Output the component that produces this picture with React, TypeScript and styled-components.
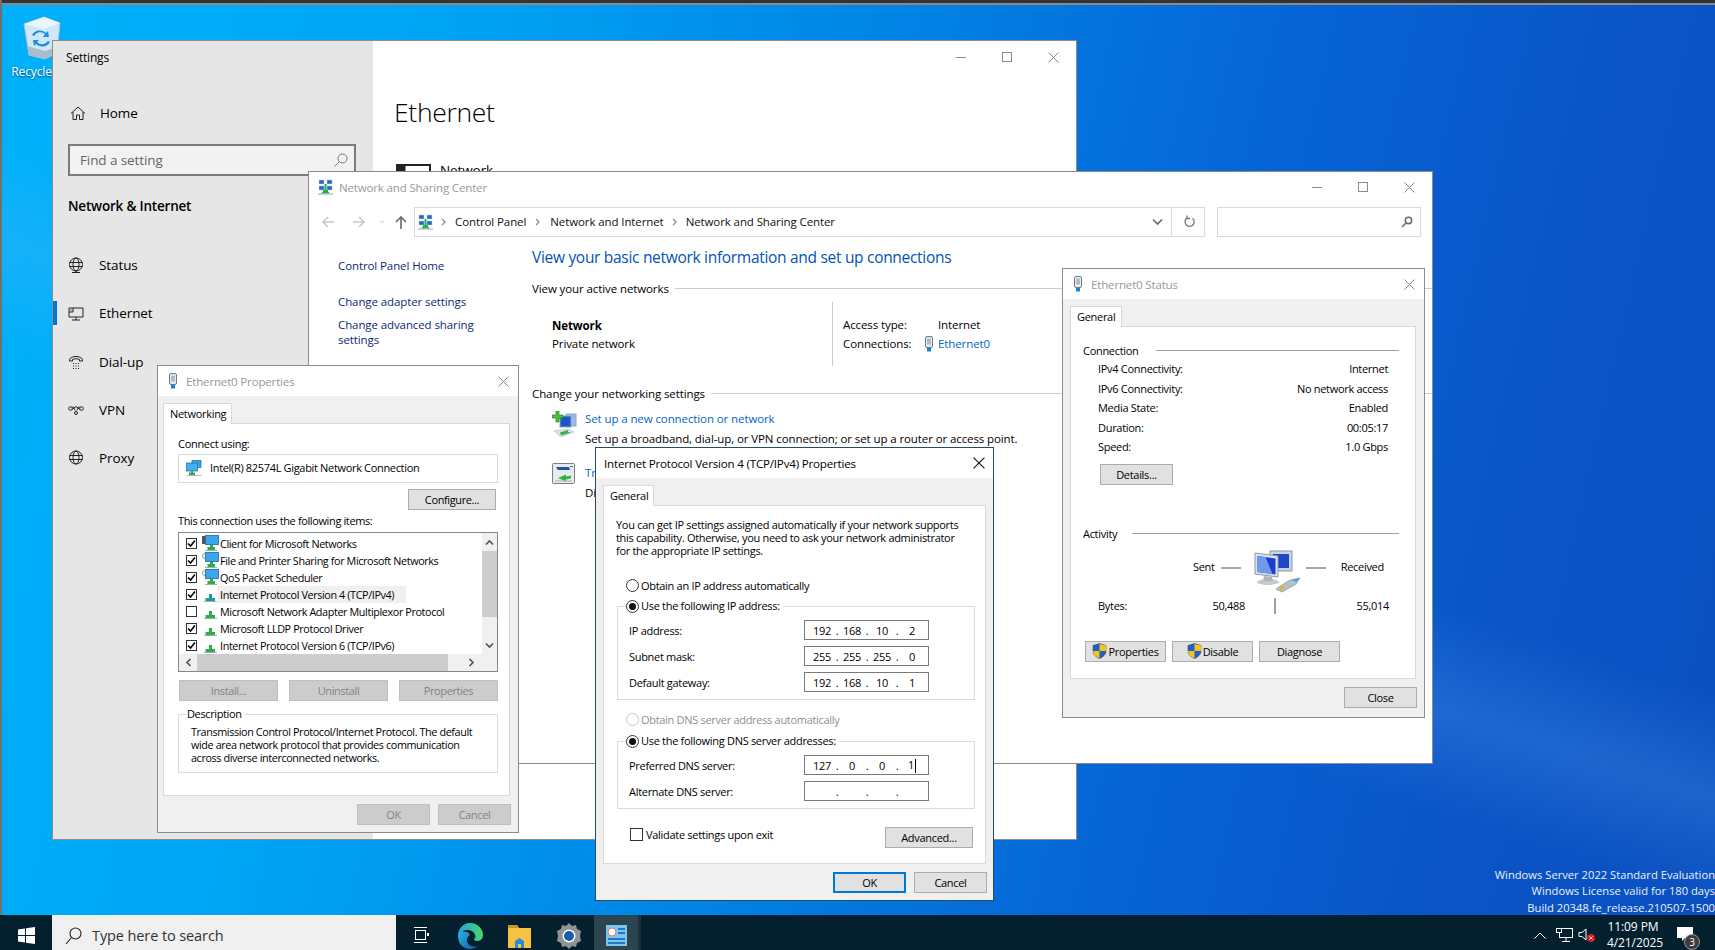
import React from 'react';
import styled, { createGlobalStyle } from 'styled-components';

const FONT = '"Open Sans", "Noto Sans", "Liberation Sans", sans-serif';

const GlobalStyle = createGlobalStyle`
  html, body { margin: 0; padding: 0; height: 100%; overflow: hidden; }
  body { font-family: ${FONT}; font-size: 11px; letter-spacing: -0.3px; color: #000; }
  * { box-sizing: border-box; }
`;

const Desktop = styled.div`
  position: relative;
  width: 1715px;
  height: 950px;
  overflow: hidden;
  display: flex;
  flex-direction: column;
  justify-content: flex-end;
  background:
    linear-gradient(18deg, rgba(255,255,255,0) 40%, rgba(120,190,255,.18) 47%, rgba(255,255,255,0) 54%),
    linear-gradient(103deg, #00b1fa 0%, #00a6f5 22%, #0086e6 45%, #0666d6 66%, #0a55c8 84%, #0a4fc0 100%);
  &::before {
    content: '';
    position: absolute;
    left: 0;
    right: 0;
    top: 0;
    height: 5px;
    background: linear-gradient(#333 0 66%, #8a8a8a 66%);
  }
  &::after {
    content: '';
    position: absolute;
    left: 0;
    top: 0;
    bottom: 0;
    width: 2px;
    background: #707070;
  }
`;

const RecycleBin = styled.div`
  position: absolute;
  left: 12px;
  top: 16px;
  width: 60px;
  display: flex;
  flex-direction: column;
  align-items: center;
  gap: 3px;
  color: #fff;
  font-size: 12px;
  letter-spacing: -0.1px;
  white-space: nowrap;
  text-shadow: 0 1px 2px rgba(0,0,0,.6);
`;

const Win = styled.div<{ $x: number; $y: number; $w: number; $h: number; $dark?: boolean }>`
  position: absolute;
  left: ${p => p.$x}px;
  top: ${p => p.$y}px;
  width: ${p => p.$w}px;
  height: ${p => p.$h}px;
  display: flex;
  flex-direction: column;
  background: #fff;
  border: 1px solid ${p => (p.$dark ? '#2b4a5c' : '#8c8c8c')};
`;

/* caption buttons */
const CapRow = styled.div`
  display: flex;
  margin-left: auto;
  flex: none;
`;
const CapBtn = styled.div<{ $h?: number; $w?: number }>`
  width: ${p => p.$w ?? 46}px;
  height: ${p => p.$h ?? 30}px;
  display: flex;
  align-items: center;
  justify-content: center;
`;

const XIcon = ({ size = 11, color = '#8a8a8a' }: { size?: number; color?: string }) => (
  <svg width={size} height={size} viewBox="0 0 11 11">
    <path d="M.5.5l10 10M10.5.5l-10 10" stroke={color} strokeWidth="1" fill="none" />
  </svg>
);
const MaxIcon = () => (
  <svg width="10" height="10" viewBox="0 0 10 10">
    <rect x=".5" y=".5" width="9" height="9" fill="none" stroke="#8a8a8a" />
  </svg>
);
const MinIcon = () => (
  <svg width="10" height="10" viewBox="0 0 10 10">
    <path d="M0 5.500h10" stroke="#8a8a8a" />
  </svg>
);

const Captions = ({ h }: { h?: number }) => (
  <CapRow>
    <CapBtn $h={h}><MinIcon /></CapBtn>
    <CapBtn $h={h}><MaxIcon /></CapBtn>
    <CapBtn $h={h}><XIcon /></CapBtn>
  </CapRow>
);

/* settings window */
const SettingsBody = styled.div`
  display: flex;
  flex: 1;
  min-height: 0;
`;
const Sidebar = styled.div`
  width: 320px;
  background: #e6e6e6;
  display: flex;
  flex-direction: column;
`;
const SetTitle = styled.div`
  height: 34px;
  line-height: 34px;
  padding-left: 13px;
  font-size: 12px;
  letter-spacing: -0.2px;
`;
const HomeRow = styled.div`
  margin-top: 14px;
  height: 48px;
  display: flex;
  align-items: center;
  gap: 14px;
  padding-left: 17px;
  font-size: 13.5px;
  letter-spacing: -0.1px;
`;
const SearchBox = styled.div`
  margin: 7px 0 0 15px;
  width: 288px;
  height: 32px;
  border: 2px solid #7a7a7a;
  background: #f2f2f2;
  display: flex;
  align-items: center;
  justify-content: space-between;
  padding: 0 5px 0 10px;
  color: #666;
  font-size: 13.5px;
  letter-spacing: -0.1px;
`;
const SideHeading = styled.div`
  margin: 10px 0 15px 15px;
  height: 40px;
  line-height: 40px;
  font-size: 13.5px;
  font-weight: 600;
  letter-spacing: -0.2px;
`;
const NavRow = styled.div<{ $active?: boolean }>`
  position: relative;
  height: 48.3px;
  display: flex;
  align-items: center;
  gap: 15px;
  padding-left: 15px;
  font-size: 13.5px;
  letter-spacing: -0.1px;
  &::before {
    content: '';
    display: ${p => (p.$active ? 'block' : 'none')};
    position: absolute;
    left: 0;
    top: 12px;
    width: 4px;
    height: 24px;
    background: #0078d7;
  }
`;
const SetMain = styled.div`
  flex: 1;
  display: flex;
  flex-direction: column;
`;
const SetHeading = styled.div`
  margin: 19px 0 0 21px;
  height: 40px;
  line-height: 40px;
  font-size: 26.5px;
  font-weight: 300;
  letter-spacing: -0.3px;
`;
const SetNetRow = styled.div`
  margin: 32px 0 0 23px;
  display: flex;
  align-items: flex-start;
  gap: 9px;
  font-size: 13.5px;
  letter-spacing: -0.1px;
  line-height: 12px;
`;

/* network and sharing center */
const TitleRow = styled.div<{ $h?: number; $pl?: number; $gap?: number }>`
  height: ${p => p.$h ?? 30}px;
  flex: none;
  display: flex;
  align-items: center;
  padding-left: ${p => p.$pl ?? 9}px;
  gap: ${p => p.$gap ?? 6}px;
`;
const TitleText = styled.span<{ $active?: boolean }>`
  color: ${p => (p.$active ? '#000' : '#999')};
  font-size: 11.6px;
  letter-spacing: -0.2px;
`;
const ToolRow = styled.div`
  height: 39px;
  flex: none;
  display: flex;
  align-items: center;
  padding-right: 11px;
`;
const NavButtons = styled.div`
  width: 105px;
  flex: none;
  display: flex;
  align-items: center;
  padding-left: 12px;
`;
const AddressBar = styled.div`
  width: 791px;
  height: 30px;
  flex: none;
  display: flex;
  align-items: center;
  border: 1px solid #d9d9d9;
  padding-left: 3px;
`;
const Crumb = styled.span`
  font-size: 11.5px;
  color: #111;
  letter-spacing: -0.1px;
`;
const AddrEnd = styled.div`
  margin-left: auto;
  display: flex;
  align-items: center;
  height: 100%;
`;
const RefreshCell = styled.div`
  width: 33px;
  height: 100%;
  margin-left: 8px;
  padding-left: 3px;
  border-left: 1px solid #d9d9d9;
  display: flex;
  align-items: center;
  justify-content: center;
`;
const TopSearch = styled.div`
  margin-left: 12px;
  flex: 1;
  height: 30px;
  border: 1px solid #d9d9d9;
  display: flex;
  align-items: center;
  justify-content: flex-end;
  padding-right: 7px;
`;
const NscBody = styled.div`
  flex: 1;
  display: flex;
  min-height: 0;
  font-size: 11.5px;
  letter-spacing: -0.1px;
`;
const LeftPane = styled.div`
  width: 222px;
  flex: none;
  padding: 17px 0 0 29px;
  color: #0d2a75;
  line-height: 15px;
`;
const PaneLink = styled.div<{ $mt?: number }>`
  margin-top: ${p => p.$mt ?? 0}px;
`;
const MainPane = styled.div`
  flex: 1;
  padding: 6px 0 0 1px;
  overflow: hidden;
`;
const NscHeading = styled.div`
  height: 20px;
  line-height: 20px;
  font-size: 15.5px;
  letter-spacing: -0.3px;
  color: #0054b4;
`;
const SectionHead = styled.div<{ $mt: number }>`
  margin-top: ${p => p.$mt}px;
  height: 15px;
  line-height: 15px;
  display: flex;
  align-items: center;
  gap: 6px;
  &::after {
    content: '';
    flex: 1;
    height: 1px;
    background: #ccc;
  }
`;
const ActiveNets = styled.div`
  margin-top: 6px;
  height: 64px;
  display: flex;
`;
const NetName = styled.div`
  width: 301px;
  padding: 15px 0 0 20px;
  border-right: 1px solid #ccc;
  line-height: 18px;
`;
const Bold = styled.div`
  font-weight: 700;
`;
const NetProps = styled.div`
  padding: 13px 0 0 10px;
  display: grid;
  grid-template-columns: 95px auto;
  grid-auto-rows: 19px;
  align-items: center;
`;
const EthLink = styled.span`
  display: inline-flex;
  align-items: center;
  color: #0066cc;
  position: relative;
`;
const ConnLabel = styled.span`
  display: flex;
  align-items: center;
  justify-content: space-between;
  padding-right: 4px;
`;
const Task = styled.div<{ $mt: number }>`
  margin-top: ${p => p.$mt}px;
  padding-left: 20px;
  display: flex;
  gap: 8px;
  line-height: 20px;
`;
const TaskLink = styled.div`
  color: #0066cc;
`;

/* dialog */
const DlgInner = styled.div<{ $pt: number; $pr: number; $pl: number }>`
  flex: 1;
  background: #f0f0f0;
  padding: ${p => p.$pt}px ${p => p.$pr}px 0 ${p => p.$pl}px;
  display: flex;
  flex-direction: column;
  min-height: 0;
`;
const Tab = styled.div<{ $w: number }>`
  width: ${p => p.$w}px;
  height: 21px;
  flex: none;
  background: #fff;
  border: 1px solid #d9d9d9;
  border-bottom: none;
  margin-bottom: -1px;
  position: relative;
  z-index: 1;
  line-height: 20px;
  padding-left: 6px;
`;
const TabPanel = styled.div<{ $h: number }>`
  height: ${p => p.$h}px;
  flex: none;
  background: #fff;
  border: 1px solid #d9d9d9;
  display: flex;
  flex-direction: column;
`;
const Footer = styled.div`
  margin: 8px -1px 0 0;
  display: flex;
  justify-content: flex-end;
  gap: 8px;
`;
const Btn = styled.div<{ $w?: number; $disabled?: boolean; $default?: boolean }>`
  width: ${p => p.$w ?? 73}px;
  height: 21px;
  flex: none;
  background: ${p => (p.$disabled ? '#cccccc' : '#e1e1e1')};
  border: ${p => (p.$default ? '2px solid #0078d7' : `1px solid ${p.$disabled ? '#bfbfbf' : '#adadad'}`)};
  color: ${p => (p.$disabled ? '#838383' : '#000')};
  display: flex;
  align-items: center;
  justify-content: center;
  gap: 1px;
`;
const Line = styled.div<{ $mt?: number; $ml?: number }>`
  margin: ${p => p.$mt ?? 0}px 0 0 ${p => p.$ml ?? 0}px;
  height: 15px;
  line-height: 15px;
`;
const PropsBody = styled.div`
  margin-left: 14px;
  letter-spacing: -0.38px;
`;
const AdapterBox = styled.div`
  margin-top: 3px;
  width: 320px;
  height: 29px;
  border: 1px solid #d9d9d9;
  display: flex;
  align-items: center;
  gap: 8px;
  padding: 0 0 2px 7px;
  letter-spacing: -0.33px;
`;
const RightRow = styled.div<{ $w: number }>`
  margin-top: 6px;
  width: ${p => p.$w}px;
  display: flex;
  justify-content: flex-end;
`;
const ItemList = styled.div`
  margin-top: 4px;
  width: 320px;
  height: 140px;
  border: 1px solid #7f8790;
  display: grid;
  grid-template-columns: 1fr 15px;
  grid-template-rows: 1fr 17px;
`;
const Rows = styled.div`
  padding-top: 2px;
  overflow: hidden;
  font-size: 10.8px;
`;
const ItemRow = styled.div`
  height: 17px;
  display: flex;
  align-items: center;
  padding-left: 7px;
`;
const ItemLabel = styled.span<{ $sel?: boolean }>`
  height: 17px;
  line-height: 17px;
  padding: 0 12px 0 2px;
  white-space: nowrap;
  background: ${p => (p.$sel ? '#f0f0f0' : 'transparent')};
`;
const Check = styled.span<{ $size?: number; $mr?: number }>`
  width: ${p => p.$size ?? 11}px;
  height: ${p => p.$size ?? 11}px;
  flex: none;
  border: 1px solid #333;
  background: #fff;
  display: flex;
  align-items: center;
  justify-content: center;
  margin-right: ${p => p.$mr ?? 6}px;
`;
const VScroll = styled.div`
  background: #f0f0f0;
  display: flex;
  flex-direction: column;
  align-items: center;
  justify-content: space-between;
`;
const VThumb = styled.div`
  width: 100%;
  height: 66px;
  background: #cdcdcd;
  margin-bottom: auto;
`;
const HScroll = styled.div`
  grid-column: 1 / span 2;
  background: #f0f0f0;
  display: flex;
  align-items: center;
`;
const HThumb = styled.div`
  width: 251px;
  height: 100%;
  background: #cdcdcd;
`;
const ArrowCell = styled.div<{ $w: number; $h: number }>`
  width: ${p => p.$w}px;
  height: ${p => p.$h}px;
  flex: none;
  display: flex;
  align-items: center;
  justify-content: center;
`;
const BtnRow = styled.div`
  margin-top: 8px;
  width: 320px;
  padding-left: 1px;
  display: flex;
  justify-content: space-between;
`;
const Fieldset = styled.fieldset<{ $w: number; $h: number; $mt: number; $ml?: number }>`
  margin: ${p => p.$mt}px 0 0 ${p => p.$ml ?? 0}px;
  width: ${p => p.$w}px;
  height: ${p => p.$h}px;
  border: 1px solid #dcdcdc;
  padding: 0;
  min-width: 0;
`;
const Legend = styled.legend`
  margin-left: 8px;
  padding: 0 3px 0 0;
  line-height: 16px;
  display: flex;
  align-items: center;
`;
const FieldGap = styled.div`
  height: 6px;
`;
const DescText = styled.div`
  padding: 3px 0 0 12px;
  line-height: 13px;
  font-size: 10.8px;
  white-space: nowrap;
`;
const InfoText = styled.div`
  margin: 12px 0 0 12px;
  line-height: 13px;
  white-space: nowrap;
`;
const RadioRow = styled.div<{ $mt: number; $dim?: boolean }>`
  margin: ${p => p.$mt}px 0 0 22px;
  height: 16px;
  display: flex;
  align-items: center;
  color: ${p => (p.$dim ? '#8f8f8f' : '#000')};
`;
const Radio = styled.span<{ $on?: boolean; $dim?: boolean }>`
  width: 13px;
  height: 13px;
  flex: none;
  border-radius: 50%;
  border: 1px solid ${p => (p.$dim ? '#c4c4c4' : '#333')};
  background: #fff;
  margin-right: 2px;
  display: flex;
  align-items: center;
  justify-content: center;
  &::after {
    content: '';
    display: ${p => (p.$on ? 'block' : 'none')};
    width: 7px;
    height: 7px;
    border-radius: 50%;
    background: #111;
  }
`;
const IpRow = styled.div`
  height: 20px;
  margin-bottom: 6px;
  padding-left: 11px;
  display: grid;
  grid-template-columns: 175px 125px;
  align-items: center;
`;
const IpBox = styled.div`
  height: 20px;
  border: 1px solid #7a7a7a;
  padding-left: 6px;
  display: flex;
  align-items: center;
  background: #fff;
`;
const IpSeg = styled.span`
  width: 22px;
  text-align: center;
  white-space: nowrap;
`;
const IpDot = styled.span`
  width: 8px;
  text-align: center;
`;
const Caret = styled.span`
  display: inline-block;
  width: 1px;
  height: 14px;
  margin-left: 1px;
  background: #000;
  vertical-align: middle;
`;
const ValidateRow = styled.div`
  margin: 18px 0 0 26px;
  width: 343px;
  display: flex;
  align-items: flex-start;
`;
const ValidateLabel = styled.div`
  display: flex;
  align-items: center;
  height: 14px;
  margin-right: auto;
`;

/* status dialog */
const HeadLine = styled.div<{ $mt: number; $gap: number }>`
  margin: ${p => p.$mt}px 16px 1px 12px;
  height: 15px;
  line-height: 15px;
  display: flex;
  align-items: center;
  gap: ${p => p.$gap}px;
  &::after {
    content: '';
    flex: 1;
    height: 1px;
    background: #a0a0a0;
  }
`;
const StatRow = styled.div`
  height: 19.5px;
  margin: 0 27px 0 27px;
  display: flex;
  align-items: center;
  justify-content: space-between;
`;
const DetailsWrap = styled.div`
  margin: 7px 0 0 29px;
`;
const Traffic = styled.div`
  margin: 8px 0 0 122px;
  height: 42px;
  display: flex;
  align-items: flex-start;
`;
const TrafficText = styled.span`
  margin-top: 10px;
  line-height: 14px;
`;
const Dash = styled.span<{ $ml: number; $mr: number }>`
  width: 20px;
  height: 2px;
  flex: none;
  margin: 17px ${p => p.$mr}px 0 ${p => p.$ml}px;
  background: #a8a8a8;
`;
const BytesRow = styled.div`
  margin: 6px 0 0 27px;
  height: 16px;
  display: grid;
  grid-template-columns: 70px 77px 29px 2px 113px;
  align-items: center;
`;
const RightCell = styled.span`
  text-align: right;
`;
const BytesBar = styled.span`
  height: 16px;
  background: #a0a0a0;
`;
const ActionRow = styled.div`
  margin: 27px 0 0 14px;
  display: flex;
  gap: 6px;
`;

/* taskbar */
const Taskbar = styled.div`
  height: 35px;
  flex: none;
  background: #04202e;
  display: flex;
  align-items: stretch;
  position: relative;
  z-index: 1;
`;
const StartBtn = styled.div`
  width: 52px;
  padding-top: 6px;
  display: flex;
  align-items: center;
  justify-content: center;
`;
const TaskSearch = styled.div`
  width: 344px;
  padding: 6px 0 0 13px;
  background: #f0f0f0;
  display: flex;
  align-items: center;
  gap: 10px;
  font-size: 14.5px;
  letter-spacing: -0.1px;
  color: #333;
`;
const TaskItem = styled.div<{ $active?: boolean }>`
  width: ${p => (p.$active ? 44 : 49.5)}px;
  padding-top: 6px;
  display: flex;
  align-items: center;
  justify-content: center;
  background: ${p => (p.$active ? '#2c4350' : 'transparent')};
`;
const ActiveEdge = styled.div`
  width: 3px;
  background: #1c3140;
`;
const Tray = styled.div`
  margin-left: auto;
  padding-top: 5px;
  display: flex;
  align-items: center;
  color: #fff;
`;
const TrayCell = styled.div<{ $w: number }>`
  width: ${p => p.$w}px;
  display: flex;
  align-items: center;
  justify-content: center;
`;
const Clock = styled.div`
  width: 52px;
  margin-left: 9px;
  text-align: center;
  line-height: 16.5px;
  font-size: 12px;
  letter-spacing: -0.1px;
  white-space: nowrap;
`;
const NotifyCell = styled.div`
  width: 56px;
  padding-right: 4px;
  display: flex;
  justify-content: center;
`;
const Badge = styled.span`
  position: absolute;
  right: -7px;
  bottom: -7px;
  width: 16px;
  height: 16px;
  border-radius: 50%;
  background: #3c3c3c;
  border: 1px solid #999;
  font-size: 10px;
  line-height: 14px;
  text-align: center;
  color: #fff;
`;
const NotifyWrap = styled.div`
  position: relative;
  width: 16px;
  height: 16px;
`;
const Watermark = styled.div`
  position: absolute;
  right: 0;
  bottom: 34px;
  text-align: right;
  color: #fff;
  font-size: 11.2px;
  letter-spacing: 0;
  line-height: 16.5px;
  opacity: .92;
`;

/* drawn icons */
const NetCenter = ({ size = 15 }: { size?: number }) => (
  <svg width={size} height={size + 1} viewBox="0 0 15 16">
    <rect x="1" y="1" width="5" height="4" fill="#2a66c4" stroke="#bcd" strokeWidth=".5" />
    <rect x="9" y="1" width="5" height="4" fill="#2a66c4" stroke="#bcd" strokeWidth=".5" />
    <rect x="1" y="7" width="5" height="4" fill="#2a66c4" stroke="#bcd" strokeWidth=".5" />
    <rect x="9" y="7" width="5" height="4" fill="#2a66c4" stroke="#bcd" strokeWidth=".5" />
    <path d="M6.500 5h2v6h1.500v2h1v1.500H4V13h1v-2h1.500z" fill="#21b04b" />
    <path d="M0 15h15" stroke="#9aa6a0" />
  </svg>
);
const Plug = () => (
  <svg width="10" height="16" viewBox="0 0 10 16" style={{ flex: 'none' }}>
    <rect x="1.500" y=".5" width="7" height="11" rx="1.500" fill="#e6ecf0" stroke="#6a7b88" />
    <rect x="3.500" y="2.500" width="1" height="6" fill="#7a8a96" />
    <rect x="5.500" y="2.500" width="1" height="6" fill="#7a8a96" />
    <rect x="3" y="12" width="4" height="3.500" fill="#1583d8" />
  </svg>
);
const ProtoIcon = ({ color = '#2dae4a' }: { color?: string }) => (
  <svg width="15" height="15" viewBox="0 0 15 15" style={{ marginTop: 2, flex: 'none' }}>
    <path d="M6 6h3v4h3v3H2.500v-3H6z" fill={color} />
    <path d="M1 13.500h13" stroke="#9ab5a5" />
  </svg>
);
const ClientIcon = ({ gear }: { gear?: boolean }) => (
  <svg width="17" height="17" viewBox="0 0 17 17" style={{ marginLeft: -1, marginRight: -1, flex: 'none' }}>
    {gear ? <circle cx="3" cy="4" r="2.500" fill="none" stroke="#8a9aa4" /> : <rect x="0" y="1" width="5" height="8" fill="#555" />}
    <rect x="3.500" y=".5" width="13" height="9" fill="#3aa6ee" stroke="#24689c" strokeWidth=".8" />
    <path d="M8 10h3v2h2v3H5.500v-3H8z" fill="#2dae4a" />
    <path d="M3 15.500h12" stroke="#9ab5a5" />
  </svg>
);
const AdapterIcon = () => (
  <svg width="16" height="16" viewBox="0 0 16 16" style={{ flex: 'none' }}>
    <rect x="6" y=".5" width="9" height="7" fill="#3aa6ee" stroke="#24689c" strokeWidth=".7" />
    <rect x=".5" y="3" width="11" height="8" fill="#43b1f2" stroke="#24689c" strokeWidth=".7" />
    <path d="M5 11h2v1.500h2V15H3v-2.500h2z" fill="#2dae4a" />
    <path d="M.5 15.500h15" stroke="#b0bdb5" />
  </svg>
);
const NewConnIcon = () => (
  <svg width="25" height="26" viewBox="0 0 25 26" style={{ flex: 'none', marginTop: 2 }}>
    <rect x="14" y="3" width="10" height="12" fill="#9db8e8" stroke="#8fa8c8" />
    <rect x="8" y="5" width="11" height="11" fill="#1c55c8" stroke="#8fa8c8" />
    <path d="M4 0h3v4h4v3H7v4H4V7H0V4h4z" fill="#4cc233" stroke="#2a7a1a" strokeWidth=".6" />
    <path d="M2 20l14-2 6 3-13 5z" fill="#dfe3e6" stroke="#aab" strokeWidth=".5" />
    <path d="M8 21.500l8-2.500 0 2 3 .5-10 3z" fill="#2fb34c" />
  </svg>
);
const TroubleIcon = () => (
  <svg width="25" height="22" viewBox="0 0 25 22" style={{ flex: 'none' }}>
    <rect x=".5" y=".5" width="22" height="20" rx="1" fill="#e8eaec" stroke="#777f86" />
    <path d="M4 4h13l1 3H6z" fill="#1c55a8" />
    <path d="M18 3h3v1h-3z" fill="#667" />
    <path d="M6 15l8-3.500v2l5-1v3l-5 1v2z" fill="#2fb34c" />
    <path d="M3 18h17" stroke="#aab" />
  </svg>
);
const MonitorIcon = () => (
  <svg width="48" height="44" viewBox="0 0 48 44" style={{ flex: 'none' }}>
    <rect x="16" y="1" width="22" height="20" fill="#c8d2e0" stroke="#8a98a8" />
    <rect x="19" y="4" width="16" height="14" fill="#1f45c8" />
    <path d="M1 3l23 3v21L1 24z" fill="#dce4ee" stroke="#8a98a8" />
    <path d="M3.500 6l18 2.500v16l-18-2.500z" fill="#1a3fd0" />
    <path d="M3.500 6l8 1 7 17-14.500-2z" fill="#6f98ee" />
    <ellipse cx="14" cy="32" rx="11" ry="3" fill="#c6c9cc" />
    <path d="M10 26l8 1 1 4H9z" fill="#b0b5ba" />
    <path d="M22 39l14-9 10-2-4 6-14 8z" fill="#b4c0cc" stroke="#7f8f9f" strokeWidth=".7" />
    <path d="M38 30l8-2-4 4z" fill="#3aa6ee" />
    <path d="M24 37l4-2 3 3-4 2z" fill="#d7b93a" />
  </svg>
);
const Shield = () => (
  <svg width="15" height="16" viewBox="0 0 15 16" style={{ flex: 'none' }}>
    <path d="M7.500.5L14 2.500V8c0 3.500-3 6-6.500 7.500C4 14 1 11.500 1 8V2.500z" fill="#1a62c4" stroke="#335" strokeWidth=".5" />
    <path d="M7.500 1L14 2.500V8H7.500zM7.500 8v7.300C4 14 1 11.500 1 8z" fill="#f5c21a" />
  </svg>
);
const CheckMark = () => (
  <svg width="9" height="9" viewBox="0 0 9 9">
    <path d="M1 4.500L3.500 7 8 1.500" fill="none" stroke="#000" strokeWidth="1.600" />
  </svg>
);
const Chevron = ({ dir, w = 9 }: { dir: 'up' | 'down' | 'left' | 'right'; w?: number }) => {
  const rot = { up: 180, down: 0, left: 90, right: -90 }[dir];
  return (
    <svg width={w} height={w} viewBox="0 0 9 9" style={{ transform: `rotate(${rot}deg)` }}>
      <path d="M1 2.500l3.500 3.500L8 2.500" fill="none" stroke="#555" strokeWidth="1.700" />
    </svg>
  );
};
const CrumbSep = ({ w = 24 }: { w?: number }) => (
  <svg width={w} height="10" viewBox={`0 0 ${w} 10`} style={{ flex: 'none' }}>
    <path d={`M${w / 2 - 2} 2l3 3-3 3`} fill="none" stroke="#888" strokeWidth="1.200" />
  </svg>
);
const NavArrow = ({ dir, color, ml }: { dir: 'l' | 'r' | 'u'; color: string; ml: number }) => (
  <svg width="14" height="14" viewBox="0 0 14 14" style={{ marginLeft: ml, flex: 'none' }}>
    {dir === 'l' && <path d="M13 7H2M7 2L2 7l5 5" fill="none" stroke={color} strokeWidth="1.500" />}
    {dir === 'r' && <path d="M1 7h11M7 2l5 5-5 5" fill="none" stroke={color} strokeWidth="1.500" />}
    {dir === 'u' && <path d="M7 14V2M2 7l5-5 5 5" fill="none" stroke={color} strokeWidth="1.700" />}
  </svg>
);
const Icon16 = ({ children }: { children: React.ReactNode }) => (
  <svg width="16" height="16" viewBox="0 0 16 16" fill="none" stroke="#222" strokeWidth="1" style={{ flex: 'none' }}>
    {children}
  </svg>
);
const GlobeShape = () => (
  <>
    <circle cx="8" cy="7.500" r="6.500" />
    <ellipse cx="8" cy="7.500" rx="3" ry="6.500" />
    <path d="M1.500 5.500h13M1.500 9.500h13" />
  </>
);

const Ip = ({ parts, caret }: { parts: string[]; caret?: boolean }) => (
  <IpBox>
    {parts.map((part, i) => (
      <React.Fragment key={i}>
        <IpSeg>{part}{caret && i === 3 && <Caret />}</IpSeg>
        {i < 3 && <IpDot>.</IpDot>}
      </React.Fragment>
    ))}
  </IpBox>
);

const Tcp = () => (
  <Win $x={595} $y={447} $w={399} $h={454} $dark>
    <TitleRow $h={30} $pl={8}>
      <TitleText $active>Internet Protocol Version 4 (TCP/IPv4) Properties</TitleText>
      <CapRow>
        <CapBtn $h={30} $w={28}><XIcon size={12} color="#111" /></CapBtn>
      </CapRow>
    </TitleRow>
    <DlgInner $pt={7} $pr={7} $pl={7}>
      <Tab $w={51}>General</Tab>
      <TabPanel $h={359}>
        <InfoText>
          You can get IP settings assigned automatically if your network supports<br />
          this capability. Otherwise, you need to ask your network administrator<br />
          for the appropriate IP settings.
        </InfoText>
        <RadioRow $mt={20}><Radio />Obtain an IP address automatically</RadioRow>
        <Fieldset $w={358} $h={102} $mt={5} $ml={13}>
          <Legend><Radio $on />Use the following IP address:</Legend>
          <FieldGap />
          <IpRow><span>IP address:</span><Ip parts={['192', '168', '10', '2']} /></IpRow>
          <IpRow><span>Subnet mask:</span><Ip parts={['255', '255', '255', '0']} /></IpRow>
          <IpRow><span>Default gateway:</span><Ip parts={['192', '168', '10', '1']} /></IpRow>
        </Fieldset>
        <RadioRow $mt={11} $dim><Radio $dim />Obtain DNS server address automatically</RadioRow>
        <Fieldset $w={358} $h={76} $mt={6} $ml={13}>
          <Legend><Radio $on />Use the following DNS server addresses:</Legend>
          <FieldGap />
          <IpRow><span>Preferred DNS server:</span><Ip parts={['127', '0', '0', '1']} caret /></IpRow>
          <IpRow><span>Alternate DNS server:</span><Ip parts={['', '', '', '']} /></IpRow>
        </Fieldset>
        <ValidateRow>
          <ValidateLabel><Check $size={13} $mr={3} />Validate settings upon exit</ValidateLabel>
          <Btn $w={88}>Advanced...</Btn>
        </ValidateRow>
      </TabPanel>
      <Footer>
        <Btn $default>OK</Btn>
        <Btn>Cancel</Btn>
      </Footer>
    </DlgInner>
  </Win>
);

const items: { label: string; icon: React.ReactNode; checked: boolean; sel?: boolean }[] = [
  { label: 'Client for Microsoft Networks', icon: <ClientIcon />, checked: true },
  { label: 'File and Printer Sharing for Microsoft Networks', icon: <ClientIcon gear />, checked: true },
  { label: 'QoS Packet Scheduler', icon: <ClientIcon gear />, checked: true },
  { label: 'Internet Protocol Version 4 (TCP/IPv4)', icon: <ProtoIcon color="#1f9a9a" />, checked: true, sel: true },
  { label: 'Microsoft Network Adapter Multiplexor Protocol', icon: <ProtoIcon />, checked: false },
  { label: 'Microsoft LLDP Protocol Driver', icon: <ProtoIcon />, checked: true },
  { label: 'Internet Protocol Version 6 (TCP/IPv6)', icon: <ProtoIcon />, checked: true },
];

const EthProps = () => (
  <Win $x={157} $y={365} $w={362} $h={468}>
    <TitleRow $pl={10} $gap={8}>
      <Plug />
      <TitleText>Ethernet0 Properties</TitleText>
      <CapRow><CapBtn $w={30}><XIcon /></CapBtn></CapRow>
    </TitleRow>
    <DlgInner $pt={7} $pr={8} $pl={5}>
      <Tab $w={69}>Networking</Tab>
      <TabPanel $h={373}>
        <Line $mt={12} $ml={14}>Connect using:</Line>
        <PropsBody>
          <AdapterBox><AdapterIcon />Intel(R) 82574L Gigabit Network Connection</AdapterBox>
          <RightRow $w={318}><Btn $w={88}>Configure...</Btn></RightRow>
          <Line $mt={3}>This connection uses the following items:</Line>
          <ItemList>
            <Rows>
              {items.map(item => (
                <ItemRow key={item.label}>
                  <Check>{item.checked && <CheckMark />}</Check>
                  {item.icon}
                  <ItemLabel $sel={item.sel}>{item.label}</ItemLabel>
                </ItemRow>
              ))}
            </Rows>
            <VScroll>
              <ArrowCell $w={15} $h={18}><Chevron dir="up" /></ArrowCell>
              <VThumb />
              <ArrowCell $w={15} $h={17}><Chevron dir="down" /></ArrowCell>
            </VScroll>
            <HScroll>
              <ArrowCell $w={18} $h={17}><Chevron dir="left" /></ArrowCell>
              <HThumb />
              <ArrowCell $w={47} $h={17}><Chevron dir="right" /></ArrowCell>
            </HScroll>
          </ItemList>
          <BtnRow>
            <Btn $w={99} $disabled>Install...</Btn>
            <Btn $w={99} $disabled>Uninstall</Btn>
            <Btn $w={99} $disabled>Properties</Btn>
          </BtnRow>
          <Fieldset $w={320} $h={67} $mt={5}>
            <Legend>Description</Legend>
            <DescText>
              Transmission Control Protocol/Internet Protocol. The default<br />
              wide area network protocol that provides communication<br />
              across diverse interconnected networks.
            </DescText>
          </Fieldset>
        </PropsBody>
      </TabPanel>
      <Footer>
        <Btn $disabled>OK</Btn>
        <Btn $disabled>Cancel</Btn>
      </Footer>
    </DlgInner>
  </Win>
);

const stats = [
  ['IPv4 Connectivity:', 'Internet'],
  ['IPv6 Connectivity:', 'No network access'],
  ['Media State:', 'Enabled'],
  ['Duration:', '00:05:17'],
  ['Speed:', '1.0 Gbps'],
];

const EthStatus = () => (
  <Win $x={1062} $y={268} $w={363} $h={450}>
    <TitleRow $pl={10} $gap={8}>
      <Plug />
      <TitleText>Ethernet0 Status</TitleText>
      <CapRow><CapBtn $w={30}><XIcon /></CapBtn></CapRow>
    </TitleRow>
    <DlgInner $pt={7} $pr={8} $pl={7}>
      <Tab $w={52}>General</Tab>
      <TabPanel $h={353}>
        <HeadLine $mt={16} $gap={17}>Connection</HeadLine>
        {stats.map(([label, value]) => (
          <StatRow key={label}><span>{label}</span><span>{value}</span></StatRow>
        ))}
        <DetailsWrap><Btn $w={73}>Details...</Btn></DetailsWrap>
        <HeadLine $mt={41} $gap={15}>Activity</HeadLine>
        <Traffic>
          <TrafficText>Sent</TrafficText>
          <Dash $ml={6} $mr={13} />
          <MonitorIcon />
          <Dash $ml={4} $mr={15} />
          <TrafficText>Received</TrafficText>
        </Traffic>
        <BytesRow>
          <span>Bytes:</span>
          <RightCell>50,488</RightCell>
          <span />
          <BytesBar />
          <RightCell>55,014</RightCell>
        </BytesRow>
        <ActionRow>
          <Btn $w={81}><Shield />Properties</Btn>
          <Btn $w={81}><Shield />Disable</Btn>
          <Btn $w={81}>Diagnose</Btn>
        </ActionRow>
      </TabPanel>
      <Footer>
        <Btn>Close</Btn>
      </Footer>
    </DlgInner>
  </Win>
);

const App: React.FC = () => (
  <>
    <GlobalStyle />
    <Desktop>
      <RecycleBin>
        <svg width="40" height="44" viewBox="0 0 40 44">
          <path d="M2 8L22 1l16 6-3 30-12 6-16-4z" fill="#cfe8f7" stroke="#9fc4dc" />
          <path d="M2 8l20 5 16-6-16-6z" fill="#eaf5fc" />
          <path d="M5 30l18 5 13-4-1 6-12 6-16-4z" fill="#a9bcc9" />
          <path d="M12 20a7 7 0 0 1 11-2l-2 3 6 0-1-6-2 2a9 9 0 0 0-14 2zM26 25a7 7 0 0 1-11 1l2-2-6 0 1 6 2-2a9 9 0 0 0 14-2z" fill="#1a8fe0" />
        </svg>
        <span>Recycle Bin</span>
      </RecycleBin>

      <Win $x={52} $y={40} $w={1025} $h={800}>
        <SettingsBody>
          <Sidebar>
            <SetTitle>Settings</SetTitle>
            <HomeRow>
              <Icon16><path d="M1 8.500L8 2l7 6.500M3 7v7.500h3.500V10h3v4.500H13V7" /></Icon16>
              Home
            </HomeRow>
            <SearchBox>
              Find a setting
              <svg width="16" height="16" viewBox="0 0 16 16" fill="none" stroke="#777">
                <circle cx="9.500" cy="6.500" r="4.500" /><path d="M6 10l-4.500 4.500" />
              </svg>
            </SearchBox>
            <SideHeading>Network &amp; Internet</SideHeading>
            <NavRow>
              <Icon16><GlobeShape /><path d="M8 14v1.500M4 15.500h8" /></Icon16>
              Status
            </NavRow>
            <NavRow $active>
              <Icon16><path d="M1 3h14v9H1zM8 12v3M4 15h8M1 7h4V3M2.500 5h1" /></Icon16>
              Ethernet
            </NavRow>
            <NavRow>
              <Icon16><path d="M1.500 7c-1-6 14-6 13 0h-3V5.500c-2-1-5-1-7 0V7zM5 9.500h1M7.500 9.500h1M10 9.500h1M5 12h1M7.500 12h1M10 12h1M5 14.500h1M7.500 14.500h1M10 14.500h1" /></Icon16>
              Dial-up
            </NavRow>
            <NavRow>
              <Icon16>
                <circle cx="2.500" cy="6.500" r="1.800" /><circle cx="13.500" cy="6.500" r="1.800" /><circle cx="8" cy="11" r="1.500" />
                <path d="M4 5.500c2-1 2 0 3 3M12 5.500c-2-1-2 0-3 3M4 7.500l4-3 4 3" />
              </Icon16>
              VPN
            </NavRow>
            <NavRow>
              <Icon16><GlobeShape /></Icon16>
              Proxy
            </NavRow>
          </Sidebar>
          <SetMain>
            <Captions h={32} />
            <SetHeading>Ethernet</SetHeading>
            <SetNetRow>
              <svg width="35" height="24" viewBox="0 0 35 24" fill="none" stroke="#222">
                <rect x="1" y="1" width="33" height="20" strokeWidth="2" />
                <rect x="2" y="2" width="7" height="7" fill="#222" />
              </svg>
              Network
            </SetNetRow>
          </SetMain>
        </SettingsBody>
      </Win>

      <Win $x={308} $y={171} $w={1125} $h={593}>
        <TitleRow $h={30}>
          <NetCenter />
          <TitleText>Network and Sharing Center</TitleText>
          <Captions h={29} />
        </TitleRow>
        <ToolRow>
          <NavButtons>
            <NavArrow dir="l" color="#c8c8c8" ml={0} />
            <NavArrow dir="r" color="#c8c8c8" ml={17} />
            <svg width="6" height="6" viewBox="0 0 6 6" style={{ marginLeft: 13, flex: 'none' }}>
              <path d="M.5 1.500L3 4l2.500-2.500" fill="none" stroke="#ccc" />
            </svg>
            <NavArrow dir="u" color="#707070" ml={9} />
          </NavButtons>
          <AddressBar>
            <NetCenter />
            <CrumbSep w={22} />
            <Crumb>Control Panel</Crumb>
            <CrumbSep />
            <Crumb>Network and Internet</Crumb>
            <CrumbSep w={22} />
            <Crumb>Network and Sharing Center</Crumb>
            <AddrEnd>
              <svg width="11" height="8" viewBox="0 0 11 8">
                <path d="M1 1.500l4.500 4.500L10 1.500" fill="none" stroke="#666" strokeWidth="1.600" />
              </svg>
              <RefreshCell>
                <svg width="12" height="13" viewBox="0 0 12 13" fill="none" stroke="#777" strokeWidth="1.300">
                  <path d="M8.500 3.200A4.600 4.600 0 1 1 3 3" /><path d="M3 .5V3.500h3" />
                </svg>
              </RefreshCell>
            </AddrEnd>
          </AddressBar>
          <TopSearch>
            <svg width="12" height="12" viewBox="0 0 12 12" fill="none" stroke="#666" strokeWidth="1.500">
              <circle cx="7.500" cy="4.500" r="3.200" /><path d="M5 7l-4 4" />
            </svg>
          </TopSearch>
        </ToolRow>
        <NscBody>
          <LeftPane>
            <PaneLink>Control Panel Home</PaneLink>
            <PaneLink $mt={21}>Change adapter settings</PaneLink>
            <PaneLink $mt={8}>Change advanced sharing<br />settings</PaneLink>
          </LeftPane>
          <MainPane>
            <NscHeading>View your basic network information and set up connections</NscHeading>
            <SectionHead $mt={14}>View your active networks</SectionHead>
            <ActiveNets>
              <NetName>
                <Bold>Network</Bold>
                Private network
              </NetName>
              <NetProps>
                <span>Access type:</span><span>Internet</span>
                <ConnLabel>Connections:<Plug /></ConnLabel>
                <EthLink>Ethernet0</EthLink>
              </NetProps>
            </ActiveNets>
            <SectionHead $mt={20}>Change your networking settings</SectionHead>
            <Task $mt={8}>
              <NewConnIcon />
              <div>
                <TaskLink>Set up a new connection or network</TaskLink>
                Set up a broadband, dial-up, or VPN connection; or set up a router or access point.
              </div>
            </Task>
            <Task $mt={14}>
              <TroubleIcon />
              <div>
                <TaskLink>Troubleshoot problems</TaskLink>
                Diagnose and repair network problems
              </div>
            </Task>
          </MainPane>
        </NscBody>
      </Win>

      <EthStatus />
      <EthProps />
      <Tcp />

      <Watermark>
        Windows Server 2022 Standard Evaluation<br />
        Windows License valid for 180 days<br />
        Build 20348.fe_release.210507-1500
      </Watermark>

      <Taskbar>
        <StartBtn>
          <svg width="17" height="17" viewBox="0 0 17 17" fill="#fff">
            <path d="M0 2.400L7 1.400V8H0zM8 1.300L17 0V8H8zM0 9h7v6.600L0 14.600zM8 9h9v8L8 15.700z" />
          </svg>
        </StartBtn>
        <TaskSearch>
          <svg width="17" height="18" viewBox="0 0 17 18" fill="none" stroke="#222" strokeWidth="1.100">
            <circle cx="10.500" cy="6.500" r="5.500" /><path d="M6.500 10.500L1 17" />
          </svg>
          Type here to search
        </TaskSearch>
        <TaskItem>
          <svg width="16" height="19" viewBox="0 0 16 19" fill="none" stroke="#fff">
            <rect x="2.500" y="4.500" width="10" height="9" /><path d="M1 1.500h13M1 16.500h13" /><rect x="14" y="7" width="2" height="3" fill="#fff" stroke="none" />
          </svg>
        </TaskItem>
        <TaskItem>
          <svg width="25" height="28" viewBox="0 0 25 28">
            <defs>
              <linearGradient id="edgeA" x1="0" y1="0" x2="1" y2="1">
                <stop offset="0" stopColor="#35c1f1" /><stop offset="1" stopColor="#0c59a4" />
              </linearGradient>
              <linearGradient id="edgeB" x1="0" y1="0" x2="1" y2="0">
                <stop offset="0" stopColor="#1da7dd" /><stop offset="1" stopColor="#4fd36a" />
              </linearGradient>
            </defs>
            <path d="M12.500 1C5 1 0 7 0 14c0 7.500 5 13 12 13 3 0 6-1 8-3-6 2-11-1-11-6 0-2 1-4 3-5-1-3-4-4-7-3 2-5 6-7 7.500-7z" fill="url(#edgeA)" />
            <path d="M1 10C3 4 8 1 12.500 1 19 1 25 6 25 13c0 4-3 6-6 6-2 0-3-1-3-2 1-1 2-2 1-4-1-4-5-5-8-5-3 0-6 1-8 2z" fill="url(#edgeB)" />
          </svg>
        </TaskItem>
        <TaskItem>
          <svg width="23" height="24" viewBox="0 0 23 24">
            <path d="M0 1h9l2 3h12v20H0z" fill="#f5c242" />
            <path d="M0 1h9l2 3H0z" fill="#c69a20" />
            <path d="M7 17l4.500-3 4.500 3v7H7z" fill="#2a8ad8" />
            <rect x="10" y="20" width="3" height="4" fill="#f5c242" />
          </svg>
        </TaskItem>
        <TaskItem>
          <svg width="24" height="26" viewBox="0 0 24 26">
            <path d="M12 0l3 3 4-1 1 4 4 2-1 5 1 5-4 2-1 4-4-1-3 3-3-3-4 1-1-4-4-2 1-5-1-5 4-2 1-4 4 1z" fill="#8f9296" />
            <circle cx="12" cy="13" r="6.500" fill="#fff" />
            <circle cx="12" cy="13" r="5" fill="#1a5cac" />
          </svg>
        </TaskItem>
        <TaskItem $active>
          <svg width="21" height="21" viewBox="0 0 21 21">
            <rect width="21" height="21" fill="#7cc6ee" />
            <circle cx="6" cy="7" r="4" fill="#fff" stroke="#d77" />
            <rect x="12" y="3" width="7" height="2" fill="#2278c4" />
            <rect x="12" y="7" width="7" height="2" fill="#2278c4" />
            <rect x="2" y="13" width="17" height="2" fill="#2278c4" />
            <rect x="2" y="17" width="17" height="2" fill="#2278c4" />
          </svg>
        </TaskItem>
        <ActiveEdge />
        <Tray>
          <TrayCell $w={24}>
            <svg width="12" height="7" viewBox="0 0 12 7" fill="none" stroke="#fff"><path d="M.5 6.500L6 1l5.500 5.500" /></svg>
          </TrayCell>
          <TrayCell $w={24}>
            <svg width="17" height="14" viewBox="0 0 17 14" fill="none" stroke="#fff">
              <rect x="3.500" y=".5" width="13" height="9" /><path d="M10 10v3M6 13.500h8" /><rect x=".5" y=".5" width="5" height="4" fill="#04202e" />
            </svg>
          </TrayCell>
          <TrayCell $w={22}>
            <svg width="18" height="16" viewBox="0 0 18 16" fill="none" stroke="#fff">
              <path d="M1 5.500h3L8 2v11L4 9.500H1z" />
              <circle cx="13" cy="11" r="4" fill="#d81e1e" stroke="none" />
              <path d="M11.500 9.500l3 3M14.500 9.500l-3 3" />
            </svg>
          </TrayCell>
          <Clock>11:09 PM<br />4/21/2025</Clock>
          <NotifyCell>
            <NotifyWrap>
              <svg width="16" height="15" viewBox="0 0 16 15" fill="#fff"><path d="M0 0h16v11H8l-3 3v-3H0z" /></svg>
              <Badge>3</Badge>
            </NotifyWrap>
          </NotifyCell>
        </Tray>
      </Taskbar>
    </Desktop>
  </>
);

export default App;
